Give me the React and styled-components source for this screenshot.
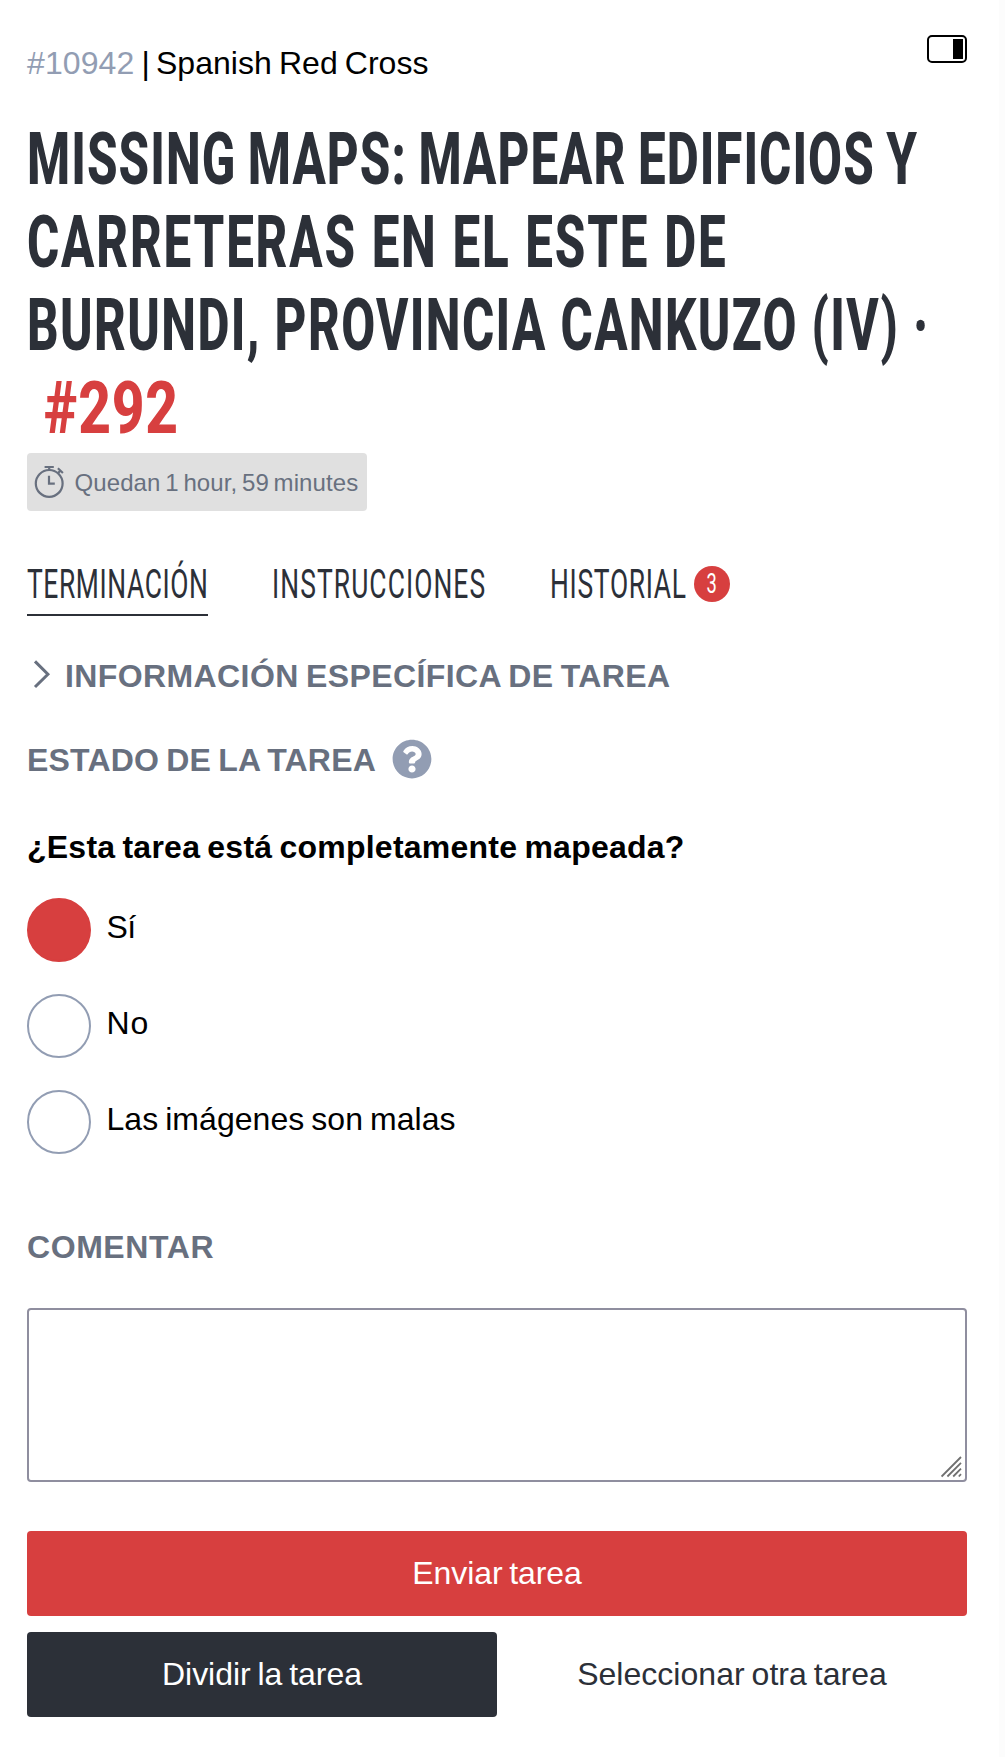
import React, { useState } from 'react';
import styled, { createGlobalStyle } from 'styled-components';
import { FaQuestionCircle } from 'react-icons/fa';

const color = {
  red: '#d73f3f',
  dark: '#2c3038',
  gray: '#68707f',
  blueGray: '#929db3',
};

const GlobalStyle = createGlobalStyle`
  * { box-sizing: border-box; }
  body { margin: 0; background: #fff; overflow-x: hidden; }
  button, input, textarea { font: inherit; margin: 0; }
`;

const Page = styled.div`
  width: 1005px;
  height: 1757px;
  border-right: 6px solid #fcfcfc;
  padding: 35px 32px 0 27px;
  font: 400 32px/36px 'Liberation Sans', Arial, sans-serif;
  color: #000;
`;

const Text = styled.span`
  letter-spacing: ${(p) => p.$spacing || 0}px;
  word-spacing: -2px;
  white-space: pre;
`;

const Header = styled.header`
  display: flex;
  justify-content: space-between;
  align-items: flex-start;
`;

const ProjectLine = styled.div`
  padding-top: 10px;
  display: flex;
  white-space: pre;
`;

const ProjectId = styled.a`
  color: ${color.blueGray};
  letter-spacing: 0.1px;
`;

const Divider = styled.span`
  width: 21.5px;
  padding-left: 7px;
`;

const SidebarToggle = styled.button`
  width: 40px;
  height: 28px;
  padding: 2px;
  display: flex;
  justify-content: flex-end;
  background: #fff;
  border: 2px solid #000;
  border-radius: 5px;

  &::after {
    content: '';
    width: 10px;
    height: 20px;
    background: #000;
  }
`;

const Title = styled.h1`
  margin: 37px 0 0;
  font: 800 72px/83px Roboto, sans-serif;
  color: ${color.dark};
  text-transform: uppercase;
`;

const TitleLine = styled.span`
  display: block;
  width: max-content;
  height: 83px;
  white-space: pre;
  transform: scaleX(${(p) => p.$scale || 0.685});
  transform-origin: 0 0;
  letter-spacing: ${(p) => p.$spacing || 0}px;
  word-spacing: ${(p) => p.$word || 0}px;
  margin-left: ${(p) => p.$indent || 0}px;
  color: ${(p) => (p.$accent ? color.red : 'inherit')};
`;

const TimeLeft = styled.div`
  width: 340px;
  height: 58px;
  margin-top: 3px;
  padding-left: 6px;
  display: flex;
  align-items: center;
  gap: 9.5px;
  border-radius: 4px;
  background: #e0e0e0;
  color: ${color.gray};
  font-size: 24px;
  line-height: 28px;

  & > span { padding-top: 2px; }
`;

const Tabs = styled.nav`
  margin-top: 49px;
  display: flex;
  gap: 64px;
`;

const Tab = styled.div`
  height: 56px;
  display: flex;
  align-items: flex-start;
  gap: 8px;
  border-bottom: 2px solid ${(p) => (p.$active ? color.dark : 'transparent')};
  font: 400 41px/48px Roboto, sans-serif;
  color: ${color.dark};
`;

const TabLabel = styled.span`
  display: block;
  width: ${(p) => p.$width}px;
  height: 48px;

  & > span {
    display: block;
    width: max-content;
    letter-spacing: ${(p) => p.$spacing}px;
    transform: scaleX(0.645);
    transform-origin: 0 0;
  }
`;

const Badge = styled.span`
  width: 36px;
  height: 36px;
  margin-top: 6px;
  display: flex;
  align-items: center;
  justify-content: center;
  border-radius: 50%;
  background: ${color.red};
  color: #fff;
  font-size: 27px;
  line-height: 34px;

  & > span {
    display: block;
    height: 34px;
    transform: scaleX(0.68);
  }
`;

const SectionTitle = styled.h3`
  margin: ${(p) => p.$top}px 0 0;
  display: flex;
  align-items: flex-start;
  font-size: 32px;
  line-height: 36px;
  font-weight: 700;
  color: ${color.gray};
  text-transform: uppercase;
`;

const ChevronBox = styled.span`
  width: 38px;
  height: 36px;
`;

const HelpTitle = styled(SectionTitle)`
  height: 40px;
  gap: 16px;

  & > span { margin-top: 3px; }
  & > svg { color: ${color.blueGray}; }
`;

const Question = styled.p`
  margin: 50px 0 33px;
  font-weight: 700;
`;

const Options = styled.div`
  display: flex;
  flex-direction: column;
  gap: 32px;
`;

const Option = styled.label`
  height: 64px;
  display: flex;
  align-items: center;
  gap: 15.5px;

  & > span { padding-bottom: 6px; }
`;

const Radio = styled.input`
  appearance: none;
  width: 64px;
  height: 64px;
  border: 2px solid ${color.blueGray};
  border-radius: 50%;
  background: #fff;

  &:checked {
    border-color: ${color.red};
    background: ${color.red};
  }
`;

const CommentBox = styled.div`
  position: relative;
  height: 174px;
  margin-top: 43px;

  & > svg {
    position: absolute;
    right: 4px;
    bottom: 4px;
    pointer-events: none;
  }
`;

const CommentInput = styled.textarea`
  display: block;
  width: 100%;
  height: 100%;
  padding: 12px;
  border: 2px solid #8f8e9f;
  border-radius: 4px;
  background: #fff;
  resize: none;
  outline: none;
`;

const Actions = styled.div`
  margin-top: 49px;
  display: grid;
  grid-template-columns: 1fr 1fr;
  gap: 16px 0;
`;

const backgrounds = { primary: color.red, secondary: color.dark, plain: '#fff' };

const Button = styled.button`
  height: 85px;
  padding: 0 0 1px;
  grid-column: ${(p) => (p.$variant === 'primary' ? '1 / -1' : 'auto')};
  border: 0;
  border-radius: 4px;
  background: ${(p) => backgrounds[p.$variant]};
  color: ${(p) => (p.$variant === 'plain' ? color.dark : '#fff')};
  line-height: 36px;
`;

const StopwatchIcon = () => (
  <svg width="32" height="36" viewBox="0 0 32 36" fill="none" stroke="currentColor" strokeWidth="2.2">
    <circle cx="16.2" cy="19.4" r="13.4" />
    <path d="M11.6 3h9.2M16.2 3v3M16 11.8v7.9h5.8M24.9 4.3l5 4.7M27.3 6.7l-2.2 2.4" />
  </svg>
);

const ChevronIcon = () => (
  <svg width="30" height="34" viewBox="0 0 30 34" fill="none" stroke="currentColor" strokeWidth="3">
    <path d="M8 3.4 20.9 16.2 8 29" />
  </svg>
);

const ResizeGrip = () => (
  <svg width="22" height="22" viewBox="0 0 22 22" stroke="#707070" strokeWidth="1.8">
    <path d="M.6 20.5 20 1M6.4 20.5 20 6.8M12.2 20.5l7.8-7.9M17.8 20.5l2.2-2.3" />
  </svg>
);

const options = [
  { id: 'yes', label: 'Sí', spacing: -0.5 },
  { id: 'no', label: 'No', spacing: 0.8 },
  { id: 'bad', label: 'Las imágenes son malas', spacing: 0.05 },
];

export default function App() {
  const [answer, setAnswer] = useState('yes');
  return (
    <>
      <GlobalStyle />
      <Page>
        <Header>
          <ProjectLine>
            <ProjectId>#10942</ProjectId>
            <Divider>|</Divider>
            <Text $spacing={0.06}>Spanish Red Cross</Text>
          </ProjectLine>
          <SidebarToggle aria-label="sidebar" />
        </Header>

        <Title>
          <TitleLine $spacing={1.5} $word={-2.6}>Missing Maps: Mapear edificios y</TitleLine>
          <TitleLine $spacing={2.6} $word={1.2}>carreteras en el este de</TitleLine>
          <TitleLine $spacing={2}>Burundi, provincia Cankuzo (IV) ·</TitleLine>
          <TitleLine $scale={0.79} $spacing={1} $indent={17} $accent>#292</TitleLine>
        </Title>

        <TimeLeft>
          <StopwatchIcon />
          <Text $spacing={0.09}>Quedan 1 hour, 59 minutes</Text>
        </TimeLeft>

        <Tabs>
          <Tab $active>
            <TabLabel $width={181} $spacing={0.9}><span>TERMINACIÓN</span></TabLabel>
          </Tab>
          <Tab>
            <TabLabel $width={214} $spacing={1.65}><span>INSTRUCCIONES</span></TabLabel>
          </Tab>
          <Tab>
            <TabLabel $width={136} $spacing={1.05}><span>HISTORIAL</span></TabLabel>
            <Badge><span>3</span></Badge>
          </Tab>
        </Tabs>

        <SectionTitle $top={42}>
          <ChevronBox><ChevronIcon /></ChevronBox>
          <Text $spacing={0.4}>Información específica de tarea</Text>
        </SectionTitle>

        <HelpTitle $top={45}>
          <Text $spacing={0.2}>Estado de la tarea</Text>
          <FaQuestionCircle size={40} />
        </HelpTitle>

        <Question><Text $spacing={0.24}>¿Esta tarea está completamente mapeada?</Text></Question>
        <Options>
          {options.map((o) => (
            <Option key={o.id}>
              <Radio
                type="radio"
                name="mapped"
                checked={answer === o.id}
                onChange={() => setAnswer(o.id)}
              />
              <Text $spacing={o.spacing}>{o.label}</Text>
            </Option>
          ))}
        </Options>

        <SectionTitle $top={75}><Text $spacing={0.57}>Comentar</Text></SectionTitle>
        <CommentBox>
          <CommentInput aria-label="Comentar" />
          <ResizeGrip />
        </CommentBox>

        <Actions>
          <Button $variant="primary"><Text $spacing={-0.1}>Enviar tarea</Text></Button>
          <Button $variant="secondary"><Text $spacing={-0.03}>Dividir la tarea</Text></Button>
          <Button $variant="plain"><Text $spacing={0.03}>Seleccionar otra tarea</Text></Button>
        </Actions>
      </Page>
    </>
  );
}
